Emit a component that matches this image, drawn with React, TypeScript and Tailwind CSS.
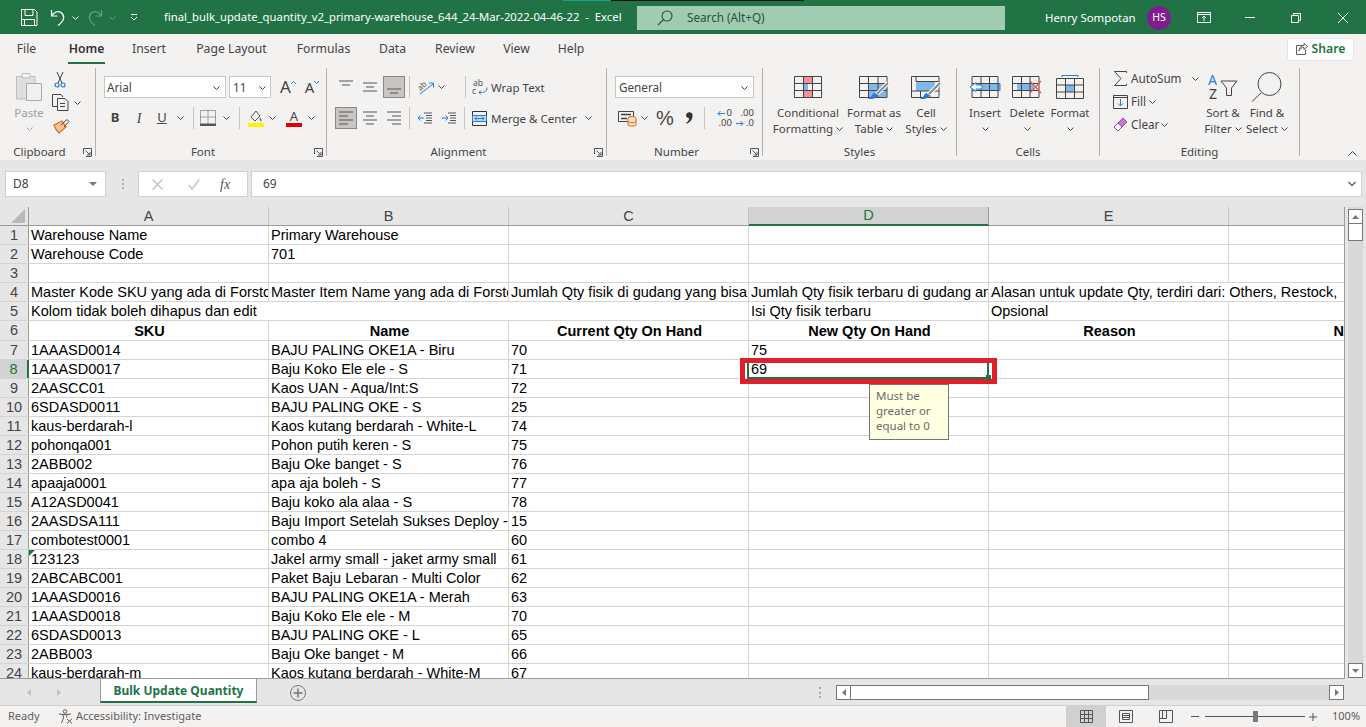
import type { ReactNode } from "react";

const ui = "font-['Noto_Sans',sans-serif]";

const rows: [string, string, string, string][] = [
  ["1AAASD0014", "BAJU PALING OKE1A - Biru", "70", "75"],
  ["1AAASD0017", "Baju Koko Ele ele - S", "71", "69"],
  ["2AASCC01", "Kaos UAN - Aqua/Int:S", "72", ""],
  ["6SDASD0011", "BAJU PALING OKE - S", "25", ""],
  ["kaus-berdarah-l", "Kaos kutang berdarah - White-L", "74", ""],
  ["pohonqa001", "Pohon putih keren - S", "75", ""],
  ["2ABB002", "Baju Oke banget - S", "76", ""],
  ["apaaja0001", "apa aja boleh - S", "77", ""],
  ["A12ASD0041", "Baju koko ala alaa - S", "78", ""],
  ["2AASDSA111", "Baju Import Setelah Sukses Deploy -", "15", ""],
  ["combotest0001", "combo 4", "60", ""],
  ["123123", "Jakel army small - jaket army small", "61", ""],
  ["2ABCABC001", "Paket Baju Lebaran - Multi Color", "62", ""],
  ["1AAASD0016", "BAJU PALING OKE1A - Merah", "63", ""],
  ["1AAASD0018", "Baju Koko Ele ele - M", "70", ""],
  ["6SDASD0013", "BAJU PALING OKE - L", "65", ""],
  ["2ABB003", "Baju Oke banget - M", "66", ""],
  ["kaus-berdarah-m", "Kaos kutang berdarah - White-M", "67", ""],
];

function Chev({ dim }: { dim?: boolean }) {
  return (
    <svg width="7" height="4" viewBox="0 0 7 4" fill="none" stroke={dim ? "#a6a6a6" : "#444"} strokeWidth="1">
      <path d="M0.5 0.5 3.5 3.5 6.5 0.5" />
    </svg>
  );
}

function Launcher() {
  return (
    <svg width="9" height="9" viewBox="0 0 9 9" fill="none" stroke="#555">
      <path d="M0.5 6V0.5H8.5V8.5H3" />
      <path d="M2.5 2.5 7 7M7 4v3H4" />
    </svg>
  );
}

function Sep() {
  return <div className="h-[22px] w-px bg-[#c8c6c4]" />;
}

function GroupLabel({ text, launcher }: { text: string; launcher?: boolean }) {
  return (
    <div className="-mb-[4px] flex h-[16px] items-center text-[11.5px] leading-[16px] text-[#444]">
      <span className="flex-1 text-center">{text}</span>
      {launcher && (
        <span className="flex w-[16px] items-center justify-end pr-[3px]">
          <Launcher />
        </span>
      )}
    </div>
  );
}

function BigButton({ className, icon, lines, chevOwnLine }: { className: string; icon: ReactNode; lines: string[]; chevOwnLine?: boolean }) {
  return (
    <div className={`flex flex-col items-center text-[11.5px] leading-[16px] text-[#444] ${className}`}>
      <div className="flex h-[37px] items-center justify-center">{icon}</div>
      {lines.map((l, i) => (
        <div key={l} className="flex h-[16px] items-center gap-[3px] whitespace-nowrap">
          {l}
          {i === lines.length - 1 && !chevOwnLine && <Chev />}
        </div>
      ))}
      {chevOwnLine && (
        <div className="flex h-[16px] items-center">
          <Chev />
        </div>
      )}
    </div>
  );
}

function TableIcon({ children, w = 30 }: { children?: ReactNode; w?: number }) {
  return (
    <svg width={w} height="24" viewBox={`0 0 ${w} 24`} fill="none">
      {children}
    </svg>
  );
}

function TitleBar() {
  return (
    <div className={`flex h-[34px] flex-col bg-[#217346] text-white ${ui}`}>
      <div className="flex h-px">
        <div className="ml-[563px] w-[48px] bg-[#16a085]" />
        <div className="w-[193px] bg-[#111]" />
      </div>
      <div className="flex h-[33px] items-center">
        <svg className="ml-[21px]" width="17" height="17" viewBox="0 0 17 17" fill="none" stroke="#fff">
          <path d="M0.5 0.5H13.5L16 3V16.5H0.5Z" />
          <path d="M4 0.5V6.5H12V0.5M3.5 16.5V10.5H13.5V16.5M0.5 10.5H3.5" />
        </svg>
        <svg className="ml-[12px]" width="16" height="18" viewBox="0 0 16 18" fill="none" stroke="#fff" strokeWidth="1.2">
          <path d="M1.5 1V7H7.5M1.5 7C4 3 8 1.5 11 3.5C15 6.5 15 11 8 16.5" />
        </svg>
        <span className="ml-[6px]">
          <svg width="7" height="4" viewBox="0 0 7 4" fill="none" stroke="#fff"><path d="M0.5 0.5 3.5 3.5 6.5 0.5" /></svg>
        </span>
        <svg className="ml-[8px]" width="16" height="18" viewBox="0 0 16 18" fill="none" stroke="#5fa27c" strokeWidth="1.2">
          <path d="M14.5 1V7H8.5M14.5 7C12 3 8 1.5 5 3.5C1 6.5 1 11 8 16.5" />
        </svg>
        <span className="ml-[6px]">
          <svg width="7" height="4" viewBox="0 0 7 4" fill="none" stroke="#5fa27c"><path d="M0.5 0.5 3.5 3.5 6.5 0.5" /></svg>
        </span>
        <svg className="ml-[14px]" width="8" height="7" viewBox="0 0 8 7" fill="none" stroke="#fff">
          <path d="M1 0.5H7M1 3 4 6 7 3" />
        </svg>
        <div className="ml-[26px] w-[473px] whitespace-pre text-[11.3px]">final_bulk_update_quantity_v2_primary-warehouse_644_24-Mar-2022-04-46-22  -  Excel</div>
        <div className="flex h-[24px] w-[368px] items-center bg-[#a0cdb1] text-[11.7px] text-[#24523a]">
          <svg className="ml-[20px]" width="16" height="16" viewBox="0 0 16 16" fill="none" stroke="#24523a" strokeWidth="1.1">
            <circle cx="10" cy="6" r="5" />
            <path d="M6.5 9.5 1 15" />
          </svg>
          <span className="ml-[14px]">Search (Alt+Q)</span>
        </div>
        <span className="ml-[40px] w-[102px] whitespace-nowrap text-[11.4px]">Henry Sompotan</span>
        <div className="flex h-[24px] w-[24px] items-center justify-center rounded-full bg-[#7d1e8e] text-[10.5px]">HS</div>
        <svg className="ml-[26px]" width="14" height="11" viewBox="0 0 14 11" fill="none" stroke="#fff">
          <path d="M0.5 0.5H13.5V10.5H0.5ZM0.5 2.5H13.5M7 9V4M5 6 7 4 9 6" />
        </svg>
        <svg className="ml-[34px]" width="10" height="1" viewBox="0 0 10 1" fill="none" stroke="#fff"><path d="M0 0.5H10" /></svg>
        <svg className="ml-[36px]" width="10" height="10" viewBox="0 0 10 10" fill="none" stroke="#fff">
          <path d="M0.5 2.5H7.5V9.5H0.5ZM2.5 2.5V0.5H9.5V7.5H7.5" />
        </svg>
        <svg className="ml-[37px]" width="10" height="10" viewBox="0 0 10 10" fill="none" stroke="#fff"><path d="M0 0 10 10M10 0 0 10" /></svg>
      </div>
    </div>
  );
}

function TabsRow() {
  const tabs: [string, string][] = [
    ["File", "ml-[17px] w-[19px]"],
    ["Home", "ml-[32px] w-[37px]"],
    ["Insert", "ml-[28px] w-[32px]"],
    ["Page Layout", "ml-[31px] w-[71px]"],
    ["Formulas", "ml-[30px] w-[53px]"],
    ["Data", "ml-[29px] w-[27px]"],
    ["Review", "ml-[29px] w-[40px]"],
    ["View", "ml-[28px] w-[27px]"],
    ["Help", "ml-[28px] w-[26px]"],
  ];
  return (
    <div className={`flex h-[30px] items-center bg-[#f3f2f1] text-[12.2px] text-[#444] ${ui}`}>
      {tabs.map(([t, c]) => (
        <div key={t} className={`flex h-[30px] flex-col items-center justify-center whitespace-nowrap ${c} ${t === "Home" ? "border-b-[2px] border-[#217346] pt-[2px] font-semibold text-[#333]" : ""}`}>
          {t}
        </div>
      ))}
      <div className="ml-auto mr-[12px] flex h-[23px] w-[67px] items-center justify-center gap-[4px] rounded-[2px] border border-[#e6e6e6] bg-white text-[12.2px] font-semibold text-[#217346]">
        <svg width="12" height="12" viewBox="0 0 12 12" fill="none" stroke="#5b5b5b">
          <path d="M7 2.5H0.5V11.5H9.5V7" />
          <path d="M3 8C3.5 5.5 5.5 4.5 8 4.5V6.5L11.5 3.5 8 0.5V2.5C5 2.5 3 5 3 8Z" />
        </svg>
        Share
      </div>
    </div>
  );
}

function Clipboard() {
  return (
    <div className="flex h-[88px] w-[96px] shrink-0 flex-col border-r border-[#b3b0ad]">
      <div className="flex flex-1">
        <div className="ml-[8px] flex w-[42px] flex-col items-center text-[11.5px] leading-[16px] text-[#a19f9d]">
          <div className="flex h-[37px] items-center">
            <svg width="28" height="31" viewBox="0 0 28 31" fill="none">
              <path d="M1.5 5.5H20V28H1.5Z" fill="#dedede" stroke="#bdbdbd" />
              <path d="M7 2.5H15V7H7Z" fill="#f3f2f1" stroke="#bdbdbd" />
              <path d="M11.5 12.5H26.5V29.5H11.5Z" fill="#f0f0f0" stroke="#a8a8a8" />
            </svg>
          </div>
          <div className="h-[16px]">Paste</div>
          <div className="flex h-[16px] items-center"><Chev dim /></div>
        </div>
        <div className="flex flex-col">
          <div className="ml-[4px] flex h-[23px] items-center">
            <svg width="12" height="16" viewBox="0 0 12 16" fill="none">
              <path d="M3 0 8 11M9 0 4 11" stroke="#444" />
              <circle cx="3" cy="13" r="2" stroke="#2b7cd3" strokeWidth="1.2" />
              <circle cx="9" cy="13" r="2" stroke="#2b7cd3" strokeWidth="1.2" />
            </svg>
          </div>
          <div className="ml-[2px] flex h-[23px] items-center gap-[5px]">
            <svg width="17" height="17" viewBox="0 0 17 17" fill="none" stroke="#444">
              <path d="M5 12.5H0.5V0.5H9L11 3" />
              <path d="M5.5 4.5H13L16 7.5V16.5H5.5ZM8 9.5H13M8 12.5H13" />
            </svg>
            <Chev />
          </div>
          <div className="ml-[3px] flex h-[23px] items-center">
            <svg width="17" height="16" viewBox="0 0 17 16" fill="none">
              <path d="M1 7 9 3 13 9 6 15C4 13 2 10 1 7Z" fill="#f8c291" stroke="#d9701e" strokeWidth="1.2" />
              <path d="M8 7 14 1.5 16 3.5 11 9" stroke="#444" />
            </svg>
          </div>
        </div>
      </div>
      <GroupLabel text="Clipboard" launcher />
    </div>
  );
}

function FontGroup() {
  return (
    <div className="flex h-[88px] w-[231px] shrink-0 flex-col border-r border-[#b3b0ad]">
      <div className="flex-1 pt-[8px] text-[#444]">
        <div className="flex h-[22px] items-center">
          <div className="ml-[8px] flex h-[22px] w-[122px] items-center justify-between border border-[#c8c6c4] bg-white pl-[2px] pr-[5px] pt-px text-[11.7px]">
            Arial <Chev />
          </div>
          <div className="ml-[3px] flex h-[22px] w-[42px] items-center justify-between border border-[#c8c6c4] bg-white pl-[3px] pr-[4px] pt-px text-[11.7px]">
            11 <Chev />
          </div>
          <div className="ml-[5px] flex w-[24px] items-start justify-center text-[17px] leading-[22px]">A<svg className="mt-[5px]" width="5" height="3" viewBox="0 0 5 3" fill="none" stroke="#2b7cd3"><path d="M0 3 2.5 0.5 5 3" /></svg></div>
          <div className="flex w-[24px] items-start justify-center text-[15px] leading-[22px]">A<svg className="mt-[5px]" width="5" height="3" viewBox="0 0 5 3" fill="none" stroke="#2b7cd3"><path d="M0 0 2.5 2.5 5 0" /></svg></div>
        </div>
        <div className="mt-[9px] flex h-[22px] items-center">
          <div className="ml-[8px] w-[22px] text-center text-[13px] font-bold">B</div>
          <div className="ml-[2px] w-[22px] text-center font-['Liberation_Serif',serif] text-[14px] italic">I</div>
          <div className="ml-px w-[22px] text-center text-[13px] underline">U</div>
          <div className="flex w-[14px] justify-center"><Chev /></div>
          <div className="ml-[6px]"><Sep /></div>
          <div className="ml-[3px] flex w-[22px] justify-center">
            <svg width="16" height="16" viewBox="0 0 16 16" fill="none">
              <path d="M0.5 0.5H15.5V13.5H0.5ZM8 0.5V13.5M0.5 7H15.5" stroke="#555" strokeDasharray="1 1" />
              <path d="M0 15H16" stroke="#222" strokeWidth="1.5" />
            </svg>
          </div>
          <div className="flex w-[14px] justify-center"><Chev /></div>
          <div className="ml-[6px]"><Sep /></div>
          <div className="ml-[3px] flex w-[25px] justify-center">
            <svg width="16" height="18" viewBox="0 0 16 18" fill="none">
              <path d="M3 8 8 2 12 7 7 12Z" stroke="#555" />
              <path d="M12 9 13 12" stroke="#2b7cd3" strokeWidth="1.5" />
              <path d="M0 16H16" stroke="#fff200" strokeWidth="4" />
            </svg>
          </div>
          <div className="flex w-[8px] justify-center"><Chev /></div>
          <div className="ml-[7px] flex w-[22px] flex-col items-center">
            <span className="h-[14px] text-[13px] leading-[14px]">A</span>
            <div className="h-[4px] w-[16px] bg-[#e00000]" />
          </div>
          <div className="flex w-[12px] justify-center"><Chev /></div>
        </div>
      </div>
      <GroupLabel text="Font" launcher />
    </div>
  );
}

function Lines({ kind }: { kind: string }) {
  const d: Record<string, string> = {
    top: "M0 1H14M3 5H11",
    mid: "M0 3H14M3 7H11M0 11H14",
    bot: "M0 9H14M3 13H11",
    left: "M0 1H14M0 5H9M0 9H14M0 13H9",
    center: "M0 1H14M3 5H11M0 9H14M3 13H11",
    right: "M0 1H14M5 5H14M0 9H14M5 13H14",
  };
  return (
    <svg width="14" height="14" viewBox="0 0 14 14" fill="none" stroke="#555">
      <path d={d[kind]} />
    </svg>
  );
}

function AlignmentGroup() {
  return (
    <div className="flex h-[88px] w-[280px] shrink-0 flex-col border-r border-[#b3b0ad]">
      <div className="flex-1 pt-[8px] text-[11.5px] text-[#444]">
        <div className="flex h-[22px] items-center">
          <div className="ml-[8px] flex w-[22px] justify-center"><Lines kind="top" /></div>
          <div className="ml-[2px] flex w-[22px] justify-center"><Lines kind="mid" /></div>
          <div className="ml-[2px] flex h-[22px] w-[22px] items-center justify-center border border-[#8a8886] bg-[#c8c6c4]"><Lines kind="bot" /></div>
          <div className="ml-[4px]"><Sep /></div>
          <div className="ml-[5px] flex w-[21px] justify-center">
            <svg className="overflow-visible" width="18" height="16" viewBox="0 0 18 16" fill="none">
              <text x="1" y="10" fontSize="8" fill="#555" transform="rotate(-45 5 8)" fontFamily="Noto Sans, sans-serif">ab</text>
              <path d="M3 15 16 5M12 4H16.5V8.5" stroke="#2b7cd3" />
            </svg>
          </div>
          <div className="flex w-[10px] justify-center"><Chev /></div>
          <div className="ml-[19px]"><Sep /></div>
          <svg className="ml-[6px] overflow-visible" width="16" height="17" viewBox="0 0 16 17" fill="none">
            <text x="1" y="7" fontSize="8.5" fill="#555" fontFamily="Noto Sans, sans-serif">ab</text>
            <text x="0" y="15" fontSize="8.5" fill="#555" fontFamily="Noto Sans, sans-serif">c</text>
            <path d="M15 8.500C15 13 12 13.500 7 13.500M9 11.500 7 13.500 9 15.500" stroke="#2b7cd3" />
          </svg>
          <span className="ml-[3px] whitespace-nowrap pt-px">Wrap Text</span>
        </div>
        <div className="mt-[9px] flex h-[22px] items-center">
          <div className="ml-[8px] flex h-[22px] w-[22px] items-center justify-center border border-[#8a8886] bg-[#c8c6c4]"><Lines kind="left" /></div>
          <div className="ml-[2px] flex w-[22px] justify-center"><Lines kind="center" /></div>
          <div className="ml-[2px] flex w-[22px] justify-center"><Lines kind="right" /></div>
          <div className="ml-[4px]"><Sep /></div>
          <svg className="ml-[8px]" width="14" height="12" viewBox="0 0 14 12" fill="none">
            <path d="M6 1H14M6 11H14M8 6H14M8 3.500H14M8 8.500H14" stroke="#555" />
            <path d="M0 6H6M2.500 3.500 0 6 2.500 8.500" stroke="#2b7cd3" />
          </svg>
          <svg className="ml-[10px]" width="14" height="12" viewBox="0 0 14 12" fill="none">
            <path d="M6 1H14M6 11H14M8 6H14M8 3.500H14M8 8.500H14" stroke="#555" />
            <path d="M0 6H6M3.500 3.500 6 6 3.500 8.500" stroke="#2b7cd3" />
          </svg>
          <div className="ml-[8px]"><Sep /></div>
          <svg className="ml-[7px]" width="15" height="15" viewBox="0 0 15 15" fill="none">
            <path d="M0.5 0.5H14.5V14.500H0.500Z" stroke="#333" />
            <path d="M0.5 4.500H14.500V10.500H0.500Z" fill="#bcdcf5" stroke="#2b7cd3" />
            <path d="M3 7.500H12M5 5.500 3 7.500 5 9.500M10 5.500 12 7.500 10 9.500" stroke="#2b7cd3" />
          </svg>
          <span className="ml-[4px] w-[86px] whitespace-nowrap pt-px">Merge &amp; Center</span>
          <span className="ml-[8px]"><Chev /></span>
        </div>
      </div>
      <GroupLabel text="Alignment" launcher />
    </div>
  );
}

function NumberGroup() {
  return (
    <div className="flex h-[88px] w-[156px] shrink-0 flex-col border-r border-[#b3b0ad]">
      <div className="flex-1 pt-[8px] text-[11.7px] text-[#444]">
        <div className="ml-[8px] flex h-[22px] w-[139px] items-center justify-between border border-[#c8c6c4] bg-white pl-[3px] pr-[5px] pt-px">
          General <Chev />
        </div>
        <div className="mt-[9px] flex h-[22px] items-center">
          <svg className="ml-[11px]" width="19" height="17" viewBox="0 0 19 17" fill="none">
            <path d="M0.5 1.500H15.500V11.500H0.500Z" stroke="#444" />
            <path d="M3 4.500H13M3 8.500H9" stroke="#444" strokeWidth="1.500" />
            <ellipse cx="14" cy="8" rx="4" ry="1.500" fill="#fbe0c4" stroke="#d9701e" />
            <path d="M10 8V15C10 16.500 18 16.500 18 15V8M10 11.500C10 13 18 13 18 11.500" fill="#fbe0c4" stroke="#d9701e" />
          </svg>
          <span className="ml-[4px]"><Chev /></span>
          <span className="ml-[7px] w-[20px] text-center font-['Liberation_Sans',sans-serif] text-[20px]">%</span>
          <span className="ml-[5px] flex w-[18px] justify-center">
            <svg width="8" height="12" viewBox="0 0 8 12"><path d="M1 2.800A3 2.800 0 1 1 7.500 4C7.500 7.500 5 10.500 1.500 11.800L1 11C3 9.800 4 8.500 4.200 6.300C2.500 6.300 1 5 1 2.800Z" fill="#333" /></svg>
          </span>
          <div className="ml-[6px]"><Sep /></div>
          <div className="ml-[7px] flex w-[20px] flex-col items-end text-[9.5px] leading-[10px]">
            <span className="flex items-center gap-[2px]">
              <svg width="8" height="7" viewBox="0 0 8 7" fill="none" stroke="#2b7cd3"><path d="M8 3.500H1M3.500 1 1 3.500 3.500 6" /></svg>
              0
            </span>
            <span>.00</span>
          </div>
          <div className="ml-[4px] flex w-[18px] flex-col items-end text-[9.5px] leading-[10px]">
            <span>.00</span>
            <span className="flex items-center gap-[2px]">
              <svg width="8" height="7" viewBox="0 0 8 7" fill="none" stroke="#2b7cd3"><path d="M0 3.500H7M4.500 1 7 3.500 4.500 6" /></svg>
              .0
            </span>
          </div>
        </div>
      </div>
      <GroupLabel text="Number" launcher />
    </div>
  );
}

const gridLines = (w: number) => (
  <g stroke="#444">
    <path d={`M0.5 1.5H${w - 0.5}V22.5H0.5ZM0.5 8.500H${w - 0.5}M0.5 15.500H${w - 0.5}M9.500 1.500V22.500M${w - 9.5} 1.500V22.500`} />
  </g>
);

function StylesGroup() {
  return (
    <div className="flex h-[88px] w-[194px] shrink-0 flex-col border-r border-[#b3b0ad]">
      <div className="flex flex-1">
        <BigButton className="ml-[10px] w-[70px]" lines={["Conditional", "Formatting"]} icon={
          <TableIcon w={28}>
            <path d="M9.500 1.500H18.500V8.500H9.500ZM9.500 15.500H18.500V22.500H9.500Z" fill="#f4919b" />
            <path d="M9.500 8.500H14V15.500H9.500Z" fill="#7fb8e9" />
            {gridLines(28)}
          </TableIcon>
        } />
        <BigButton className="ml-px w-[60px]" lines={["Format as", "Table"]} icon={
          <TableIcon w={31}>
            <path d="M10 8.500H28V22.500H10Z" fill="#7fb8e9" />
            <g stroke="#444"><path d="M0.500 1.500H28V22.500H0.500ZM0.500 8.500H28M0.500 15.500H28M9.500 1.500V22.500M19 1.500V22.500" /></g>
            <path d="M29 8 18 19" stroke="#fff" strokeWidth="4" />
            <path d="M29 8 18 19" stroke="#888" strokeWidth="2" />
            <path d="M15 18C12 20 13 23 8 24C13 25 18 23 18.500 20Z" fill="#2b7cd3" />
          </TableIcon>
        } />
        <BigButton className="w-[44px]" lines={["Cell", "Styles"]} icon={
          <TableIcon w={31}>
            <path d="M5 6.500H24V16H5Z" fill="#7fb8e9" />
            <g stroke="#444"><path d="M0.500 1.500H28V22.500H0.500ZM5 1.500V6.500H28M0.500 16H28M9.500 16V22.500M19 16V22.500" /></g>
            <path d="M29 8 18 19" stroke="#fff" strokeWidth="4" />
            <path d="M29 8 18 19" stroke="#888" strokeWidth="2" />
            <path d="M15 18C12 20 13 23 8 24C13 25 18 23 18.500 20Z" fill="#2b7cd3" />
          </TableIcon>
        } />
      </div>
      <GroupLabel text="Styles" />
    </div>
  );
}

function CellsGroup() {
  return (
    <div className="flex h-[88px] w-[143px] shrink-0 flex-col border-r border-[#b3b0ad]">
      <div className="flex flex-1">
        <BigButton className="ml-[8px] w-[40px]" chevOwnLine lines={["Insert"]} icon={
          <TableIcon w={32}>
            <path d="M10 8.500H31V15.500H10Z" fill="#7fb8e9" stroke="#2b7cd3" />
            <g stroke="#444"><path d="M3 1.500H29V22.500H3ZM3 8.500H29M3 15.500H29M12 1.500V22.500M20.500 1.500V22.500" /></g>
            <path d="M1 12 7 7.500V10H13V14H7V16.500Z" fill="#fff" stroke="#2b7cd3" />
          </TableIcon>
        } />
        <BigButton className="ml-px w-[42px]" chevOwnLine lines={["Delete"]} icon={
          <TableIcon w={30}>
            <path d="M5 8.500H22V15.500H5Z" fill="#7fb8e9" />
            <g stroke="#444"><path d="M0.500 1.500H27V22.500H0.500ZM0.500 8.500H27M0.500 15.500H27M9.500 1.500V22.500M18 1.500V22.500" /></g>
            <path d="M18 6 29 18M29 6 18 18" stroke="#e8534f" strokeWidth="1.200" />
          </TableIcon>
        } />
        <BigButton className="w-[44px]" chevOwnLine lines={["Format"]} icon={
          <TableIcon w={28}>
            <path d="M9.500 10H18.500V17H9.500Z" fill="#7fb8e9" />
            <g stroke="#444"><path d="M0.500 3.500H27.500V23.500H0.500ZM0.500 10H27.500M0.500 17H27.500M9.500 3.500V23.500M18.500 3.500V23.500" /></g>
            <path d="M6 0.500H22M6 0V2M22 0V2" stroke="#2b7cd3" />
          </TableIcon>
        } />
      </div>
      <GroupLabel text="Cells" />
    </div>
  );
}

function EditingGroup() {
  return (
    <div className="flex h-[88px] w-[200px] shrink-0 flex-col border-r border-[#b3b0ad]">
      <div className="flex flex-1">
        <div className="ml-[11px] flex w-[88px] flex-col text-[11.7px] text-[#444]">
          <div className="flex h-[21px] items-center">
            <span className="flex w-[19px] justify-center">
              <svg width="13" height="15" viewBox="0 0 13 15" fill="none" stroke="#444"><path d="M12.500 2V0.500H0.500L7 7.500 0.500 14.500H12.500V13" /></svg>
            </span>
            <span className="ml-px">AutoSum</span>
            <span className="ml-[10px]"><Chev /></span>
          </div>
          <div className="mt-px flex h-[23px] items-center">
            <span className="flex w-[19px] justify-center">
              <svg width="15" height="14" viewBox="0 0 15 14" fill="none">
                <path d="M0.500 0.500H14.500V13.500H0.500ZM0.500 2.500H14.500" stroke="#444" />
                <path d="M7.500 4V11M5 8.500 7.500 11 10 8.500" stroke="#2b7cd3" />
              </svg>
            </span>
            <span className="ml-px">Fill</span>
            <span className="ml-[3px]"><Chev /></span>
          </div>
          <div className="flex h-[23px] items-center">
            <span className="flex w-[19px] justify-center">
              <svg width="15" height="15" viewBox="0 0 15 15" fill="none">
                <path d="M10 1 14 5 5 14 1 10Z" fill="#fff" stroke="#a349a4" />
                <path d="M10 1 14 5 9 10 5 6Z" fill="#c27bc8" stroke="#a349a4" />
              </svg>
            </span>
            <span className="ml-px">Clear</span>
            <span className="ml-[2px]"><Chev /></span>
          </div>
        </div>
        <BigButton className="w-[48px]" lines={["Sort &", "Filter"]} icon={
          <svg width="30" height="29" viewBox="0 0 30 29" fill="none">
            <text x="0" y="13" fontSize="14" fill="#2b7cd3" fontFamily="Noto Sans, sans-serif">A</text>
            <text x="1" y="27" fontSize="14" fill="#444" fontFamily="Noto Sans, sans-serif">Z</text>
            <path d="M13 9H29L23.500 16V23.500H18.500V16Z" stroke="#444" />
          </svg>
        } />
        <BigButton className="w-[40px]" lines={["Find &", "Select"]} icon={
          <svg width="32" height="30" viewBox="0 0 32 30" fill="none" stroke="#444">
            <circle cx="18.500" cy="12" r="11.500" />
            <path d="M10 21 1 29.500" />
          </svg>
        } />
      </div>
      <GroupLabel text="Editing" />
    </div>
  );
}

function Ribbon() {
  return (
    <div className={`flex h-[96px] bg-[#f3f2f1] pt-[4px] shadow-[0_2px_3px_rgba(0,0,0,0.15)] ${ui}`}>
      <Clipboard />
      <FontGroup />
      <AlignmentGroup />
      <NumberGroup />
      <StylesGroup />
      <CellsGroup />
      <EditingGroup />
      <div className="ml-auto mr-[9px] mt-[83px] h-fit">
        <svg width="9" height="5" viewBox="0 0 9 5" fill="none" stroke="#444"><path d="M0.500 4.500 4.500 0.500 8.500 4.500" /></svg>
      </div>
    </div>
  );
}

function FormulaBar() {
  return (
    <div className="flex h-[47px] items-start bg-[#e6e6e6] pt-[11px] text-[#444]">
      <div className={`ml-[5px] flex h-[26px] w-[101px] items-center justify-between border border-[#d0d0d0] bg-white pl-[7px] pr-[8px] text-[12px] ${ui}`}>
        D8
        <svg width="8" height="4" viewBox="0 0 8 4"><path d="M0 0H8L4 4Z" fill="#777" /></svg>
      </div>
      <div className="ml-[15px] flex h-[26px] w-[3px] flex-col items-center justify-center gap-[2px]">
        <div className="h-[2px] w-[2px] bg-[#b0b0b0]" />
        <div className="h-[2px] w-[2px] bg-[#b0b0b0]" />
        <div className="h-[2px] w-[2px] bg-[#b0b0b0]" />
      </div>
      <div className="ml-[14px] flex h-[26px] w-[110px] items-center border border-[#d0d0d0] bg-white">
        <svg className="ml-[13px]" width="11" height="11" viewBox="0 0 11 11" fill="none" stroke="#c4c4c4" strokeWidth="1.500"><path d="M0.500 0.500 10.500 10.500M10.500 0.500 0.500 10.500" /></svg>
        <svg className="ml-[25px]" width="12" height="11" viewBox="0 0 12 11" fill="none" stroke="#c4c4c4" strokeWidth="1.500"><path d="M0.500 6 4 10 11.500 0.500" /></svg>
        <span className="ml-[20px] font-['Liberation_Serif',serif] text-[14px] italic text-[#555]">fx</span>
      </div>
      <div className={`ml-[3px] flex h-[26px] w-[1111px] items-center justify-between border border-[#d0d0d0] bg-white pl-[11px] pr-[5px] text-[12px] ${ui}`}>
        69
        <svg width="8" height="6" viewBox="0 0 8 6" fill="none" stroke="#666" strokeWidth="1.500"><path d="M0.500 1 4 4.500 7.500 1" /></svg>
      </div>
    </div>
  );
}

function Cell({ children, className = "" }: { children?: ReactNode; className?: string }) {
  return (
    <div className={`flex h-full w-[240px] shrink-0 items-center overflow-hidden whitespace-nowrap border-r border-[#d4d4d4] pl-[2px] pt-px ${className}`}>
      {children}
    </div>
  );
}

function RowHeader({ n, active }: { n: number; active?: boolean }) {
  return (
    <div className={`flex h-full w-[29px] shrink-0 items-center justify-center border-r ${active ? "border-r-[2px] border-[#217346] bg-[#d2d2d2] text-[#217346]" : "border-[#9b9b9b] bg-[#e6e6e6] text-[#444]"}`}>
      {n}
    </div>
  );
}

function SheetRow({ n, tall, children }: { n: number; tall?: boolean; children: ReactNode }) {
  return (
    <div className={`flex border-b border-[#d4d4d4] ${tall ? "h-[20px]" : "h-[19px]"}`}>
      <RowHeader n={n} active={n === 8} />
      {children}
    </div>
  );
}

function Grid() {
  return (
    <div className="relative flex h-[472px] bg-[#e6e6e6]">
      <div className="h-[472px] w-[1345px] overflow-hidden border-b border-r border-[#9b9b9b] bg-white font-['Liberation_Sans',sans-serif] text-[14.5px] leading-[19px] text-black">
        <div className="flex h-[19px] border-b border-[#9b9b9b] bg-[#e6e6e6] text-[#444]">
          <div className="flex w-[29px] shrink-0 items-end justify-end border-r border-[#9b9b9b] pb-[2px] pr-[3px]">
            <svg width="14" height="14" viewBox="0 0 14 14"><path d="M14 0V14H0Z" fill="#b9b9b9" /></svg>
          </div>
          {["A", "B", "C", "D", "E", "F"].map((c) => (
            <div key={c} className={`flex w-[240px] shrink-0 items-center justify-center border-r ${c === "D" ? "-mb-px border-b-[2px] border-b-[#217346] border-r-[#9b9b9b] bg-[#d2d2d2] text-[#217346]" : "border-[#c4c4c4]"}`}>
              {c === "F" ? "" : c}
            </div>
          ))}
        </div>
        <SheetRow n={1}><Cell>Warehouse Name</Cell><Cell>Primary Warehouse</Cell><Cell /><Cell /><Cell /><Cell /></SheetRow>
        <SheetRow n={2}><Cell>Warehouse Code</Cell><Cell>701</Cell><Cell /><Cell /><Cell /><Cell /></SheetRow>
        <SheetRow n={3}><Cell /><Cell /><Cell /><Cell /><Cell /><Cell /></SheetRow>
        <SheetRow n={4}>
          <Cell>Master Kode SKU yang ada di Forstok</Cell>
          <Cell>Master Item Name yang ada di Forstok</Cell>
          <Cell>Jumlah Qty fisik di gudang yang bisa dijual</Cell>
          <Cell>Jumlah Qty fisik terbaru di gudang anda</Cell>
          <Cell className="w-[480px]">Alasan untuk update Qty, terdiri dari: Others, Restock,</Cell>
        </SheetRow>
        <SheetRow n={5}><Cell className="w-[480px] border-r-0">Kolom tidak boleh dihapus dan edit</Cell><Cell /><Cell>Isi Qty fisik terbaru</Cell><Cell>Opsional</Cell><Cell /></SheetRow>
        <SheetRow n={6} tall>
          {["SKU", "Name", "Current Qty On Hand", "New Qty On Hand", "Reason", "Note"].map((h) => (
            <Cell key={h} className="justify-center pl-0 font-bold">{h}</Cell>
          ))}
        </SheetRow>
        {rows.map((r, i) => {
          const n = i + 7;
          return (
            <SheetRow key={n} n={n}>
              <div className="relative flex h-full w-[240px] shrink-0 items-center overflow-hidden whitespace-nowrap border-r border-[#d4d4d4] pl-[2px] pt-px">
                {n === 18 && <div className="absolute left-0 top-0 h-0 w-0 border-r-[6px] border-t-[6px] border-r-transparent border-t-[#107c41]" />}
                {r[0]}
              </div>
              <Cell>{r[1]}</Cell>
              <Cell>{r[2]}</Cell>
              <div className="relative flex h-full w-[240px] shrink-0 items-center whitespace-nowrap border-r border-[#d4d4d4] pl-[2px] pt-px">
                {r[3]}
                {n === 8 && (
                  <>
                    <div className="absolute -bottom-[1px] -left-[2px] -right-[2px] h-[2px] bg-[#217346]" />
                    <div className="absolute -left-[2px] bottom-0 top-0 w-[2px] bg-[#217346]" />
                    <div className="absolute bottom-0 right-[-1px] top-[3px] w-[2px] bg-[#217346]" />
                    <div className="absolute -left-[9px] -top-[2px] z-10 h-[26px] w-[257px] border-[5px] border-[#e01f2b]" />
                    <div className="absolute -bottom-[2px] -right-[3px] z-20 h-[5px] w-[5px] bg-[#217346]" />
                    <div className={`absolute left-[120px] top-[24px] z-20 h-[56px] w-[80px] whitespace-normal border border-[#767676] bg-[#ffffe1] pl-[6px] pr-[4px] pt-[3px] text-[11.5px] leading-[15px] text-[#6b6b6b] ${ui}`}>
                      Must be greater or equal to 0
                    </div>
                  </>
                )}
              </div>
              <Cell />
              <Cell />
            </SheetRow>
          );
        })}
      </div>
      <div className="ml-[3px] flex h-[471px] w-[15px] flex-col bg-[#d9d9d9]">
        <div className="mt-[2px] flex h-[15px] items-center justify-center border border-[#777] bg-white">
          <svg width="7" height="4" viewBox="0 0 7 4"><path d="M3.500 0 7 4H0Z" fill="#777" /></svg>
        </div>
        <div className="h-[17px] border border-t-0 border-[#777] bg-white" />
        <div className="flex-1" />
        <div className="flex h-[15px] items-center justify-center border border-[#777] bg-white">
          <svg width="7" height="4" viewBox="0 0 7 4"><path d="M0 0H7L3.500 4Z" fill="#777" /></svg>
        </div>
      </div>
    </div>
  );
}

function SheetTabs() {
  return (
    <div className={`flex h-[27px] bg-[#e6e6e6] border-b border-[#d0d0d0] ${ui}`}>
      <svg className="ml-[27px] mt-[10px]" width="4" height="7" viewBox="0 0 4 7"><path d="M4 0V7L0 3.500Z" fill="#c0c0c0" /></svg>
      <svg className="ml-[26px] mt-[10px]" width="4" height="7" viewBox="0 0 4 7"><path d="M0 0V7L4 3.500Z" fill="#c0c0c0" /></svg>
      <div className="ml-[39px] flex h-[24px] w-[157px] items-center justify-center border-x border-b-[2px] border-x-[#9b9b9b] border-b-[#217346] bg-white pt-[2px] text-[12px] font-bold text-[#217346]">
        Bulk Update Quantity
      </div>
      <svg className="ml-[33px] mt-[6px]" width="16" height="16" viewBox="0 0 16 16" fill="none" stroke="#777">
        <circle cx="8" cy="8" r="7.500" />
        <path d="M8 3.500V12.500M3.500 8H12.500" strokeWidth="1.500" />
      </svg>
      <div className="ml-[513px] mt-[8px] flex h-[11px] w-[3px] flex-col justify-between">
        <div className="h-[2px] w-[2px] bg-[#a8a8a8]" />
        <div className="h-[2px] w-[2px] bg-[#a8a8a8]" />
        <div className="h-[2px] w-[2px] bg-[#a8a8a8]" />
      </div>
      <div className="ml-[14px] mt-[6px] flex h-[15px] w-[508px]">
        <div className="flex w-[15px] items-center justify-center border border-[#777] bg-white">
          <svg width="4" height="7" viewBox="0 0 4 7"><path d="M4 0V7L0 3.500Z" fill="#777" /></svg>
        </div>
        <div className="w-[298px] border border-l-0 border-[#777] bg-white" />
        <div className="flex-1 bg-[#d9d9d9]" />
        <div className="flex w-[15px] items-center justify-center border border-[#777] bg-white">
          <svg width="4" height="7" viewBox="0 0 4 7"><path d="M0 0V7L4 3.500Z" fill="#777" /></svg>
        </div>
      </div>
    </div>
  );
}

function StatusBar() {
  return (
    <div className={`flex h-[21px] items-center bg-[#f3f2f1] text-[11px] text-[#605e5c] ${ui}`}>
      <span className="ml-[8px] w-[50px]">Ready</span>
      <svg width="15" height="15" viewBox="0 0 15 15" fill="none" stroke="#605e5c">
        <circle cx="7" cy="2.500" r="1.800" />
        <path d="M1 5 5 5.500H9L13 5M5 5.500 5.500 9 3.500 14M9 5.500 8.500 8.500" />
        <path d="M9 10 14 14.500M14 10 9 14.500" />
      </svg>
      <span className="ml-[3px] w-[123px] whitespace-nowrap">Accessibility: Investigate</span>
      <div className="ml-[867px] flex h-[21px] w-[40px] items-center justify-center bg-[#d2d0ce]">
        <svg width="13" height="13" viewBox="0 0 13 13" fill="none" stroke="#555">
          <path d="M0.500 0.500H12.500V12.500H0.500ZM4.500 0.500V12.500M8.500 0.500V12.500M0.500 4.500H12.500M0.500 8.500H12.500" />
        </svg>
      </div>
      <svg className="ml-[13px]" width="14" height="13" viewBox="0 0 14 13" fill="none" stroke="#555">
        <path d="M0.500 0.500H13.500V12.500H0.500ZM3.500 3.500H10.500V9.500H3.500ZM3.500 5.500H10.500M3.500 7.500H10.500" />
      </svg>
      <svg className="ml-[26px]" width="14" height="13" viewBox="0 0 14 13" fill="none" stroke="#555">
        <path d="M0.500 0.500H13.500V12.500H0.500ZM0.500 8.500H7.500V0.500M3.500 0.500V8.500" />
      </svg>
      <svg className="ml-[18px]" width="8" height="1" viewBox="0 0 8 1"><path d="M0 0.500H8" stroke="#555" /></svg>
      <div className="ml-[6px] flex h-[11px] w-[100px] items-center justify-center bg-[linear-gradient(#555,#555)] bg-[length:100%_1px] bg-center bg-no-repeat">
        <div className="h-[11px] w-[5px] bg-[#7a7a7a]" />
      </div>
      <svg className="ml-[4px]" width="8" height="8" viewBox="0 0 8 8"><path d="M0 4H8M4 0V8" stroke="#555" /></svg>
      <span className="ml-[15px] whitespace-nowrap">100%</span>
    </div>
  );
}

export default function App() {
  return (
    <div className="flex h-[727px] w-[1366px] flex-col overflow-hidden">
      <TitleBar />
      <TabsRow />
      <Ribbon />
      <FormulaBar />
      <Grid />
      <SheetTabs />
      <StatusBar />
    </div>
  );
}
